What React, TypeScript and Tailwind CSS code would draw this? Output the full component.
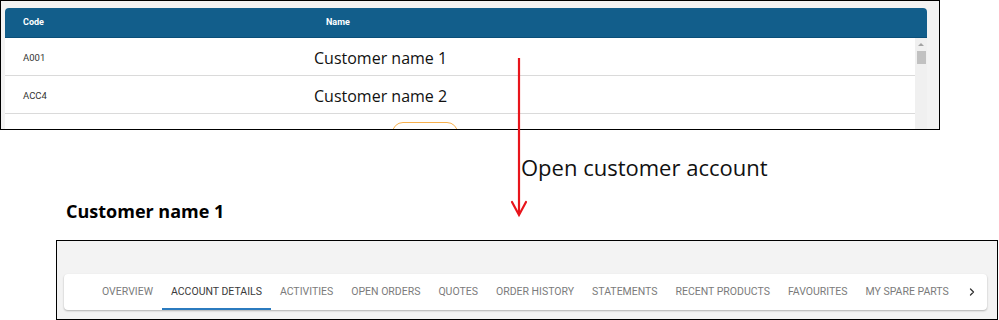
import { ChevronRight } from 'lucide-react';

const rows = [
  { code: 'A001', name: 'Customer name 1' },
  { code: 'ACC4', name: 'Customer name 2' },
];

const tabs = [
  'Overview',
  'Account details',
  'Activities',
  'Open orders',
  'Quotes',
  'Order history',
  'Statements',
  'Recent products',
  'Favourites',
  'My spare parts',
];

function CustomerTable() {
  return (
    <div className="h-[130px] w-[940px] overflow-hidden border border-black bg-[#f3f3f3] pl-[4px] pt-[7px]">
      <div className="w-[922px] overflow-hidden rounded-t-[4px] bg-white">
        <div className="flex h-[30px] items-center border-b border-[#0b4f78] bg-[#125e8b] font-['Roboto',sans-serif] text-[9px] font-bold text-white">
          <div className="w-[291px] pl-[18px]">Code</div>
          <div className="pl-[30px]">Name</div>
        </div>
        <div className="flex">
          <div className="flex-1">
            {rows.map((row) => (
              <div key={row.code} className="flex h-[38px] items-center border-b border-[#dadada] pt-[3px]">
                <div className="w-[291px] pl-[18px] font-['Roboto',sans-serif] text-[9.5px] text-[#333]">
                  {row.code}
                </div>
                <div className="pl-[18px] font-['Open_Sans',sans-serif] text-[16px] text-[#111]">{row.name}</div>
              </div>
            ))}
            <div className="h-[30px] pl-[387px] pt-[8px]">
              <div className="h-[24px] w-[66px] rounded-[11px] border border-[#f8b04c]" />
            </div>
          </div>
          <div className="flex h-[92px] w-[12px] flex-col items-center bg-[#f0f0f0] pt-[5px]">
            <div className="h-0 w-0 border-x-[3px] border-b-[3px] border-x-transparent border-b-[#a3a3a3]" />
            <div className="mt-[5px] h-[13px] w-[9px] bg-[#c1c1c1]" />
          </div>
        </div>
      </div>
    </div>
  );
}

function AccountTabs() {
  return (
    <div className="ml-[56px] h-[80px] w-[942px] border border-black bg-[#f3f3f3] pl-[7px] pr-[10px] pt-[33px]">
      <div className="flex h-[36px] items-stretch rounded-[4px] bg-white pl-[29px] shadow-[0_1px_2px_rgba(0,0,0,0.28)]">
        {tabs.map((tab, i) => (
          <div
            key={tab}
            className={
              i === 1
                ? "flex items-center border-b-2 border-[#2b7bbf] px-[9px] pt-[2px] font-['Roboto',sans-serif] text-[10.5px] uppercase text-[#3a3a3a]"
                : "flex items-center border-b-2 border-transparent px-[9px] pt-[2px] font-['Roboto',sans-serif] text-[10.5px] uppercase text-[#7b7b7b]"
            }
          >
            {tab}
          </div>
        ))}
        <div className="flex items-center pl-[8px] text-[#333]">
          <ChevronRight size={12} strokeWidth={2.6} />
        </div>
      </div>
    </div>
  );
}

export default function App() {
  return (
    <div className="relative h-[320px] w-[999px] overflow-hidden bg-white">
      <CustomerTable />
      <p className="ml-[521px] mt-[22px] font-['Open_Sans',sans-serif] text-[22px] leading-[30px] text-[#111]">
        Open customer account
      </p>
      <h2 className="ml-[66px] mt-[17px] font-['Open_Sans',sans-serif] text-[18px] font-bold leading-[24px] text-black">
        Customer name 1
      </h2>
      <div className="mt-[17px]">
        <AccountTabs />
      </div>
      <svg
        className="absolute left-[510px] top-[56px]"
        width="18"
        height="162"
        viewBox="0 0 18 162"
        fill="none"
      >
        <line x1="9" y1="2" x2="9" y2="158" stroke="#e8141b" strokeWidth="2.2" />
        <path d="M2 146 L9 159 L16 146" stroke="#e8141b" strokeWidth="2.2" strokeLinecap="round" />
      </svg>
    </div>
  );
}
